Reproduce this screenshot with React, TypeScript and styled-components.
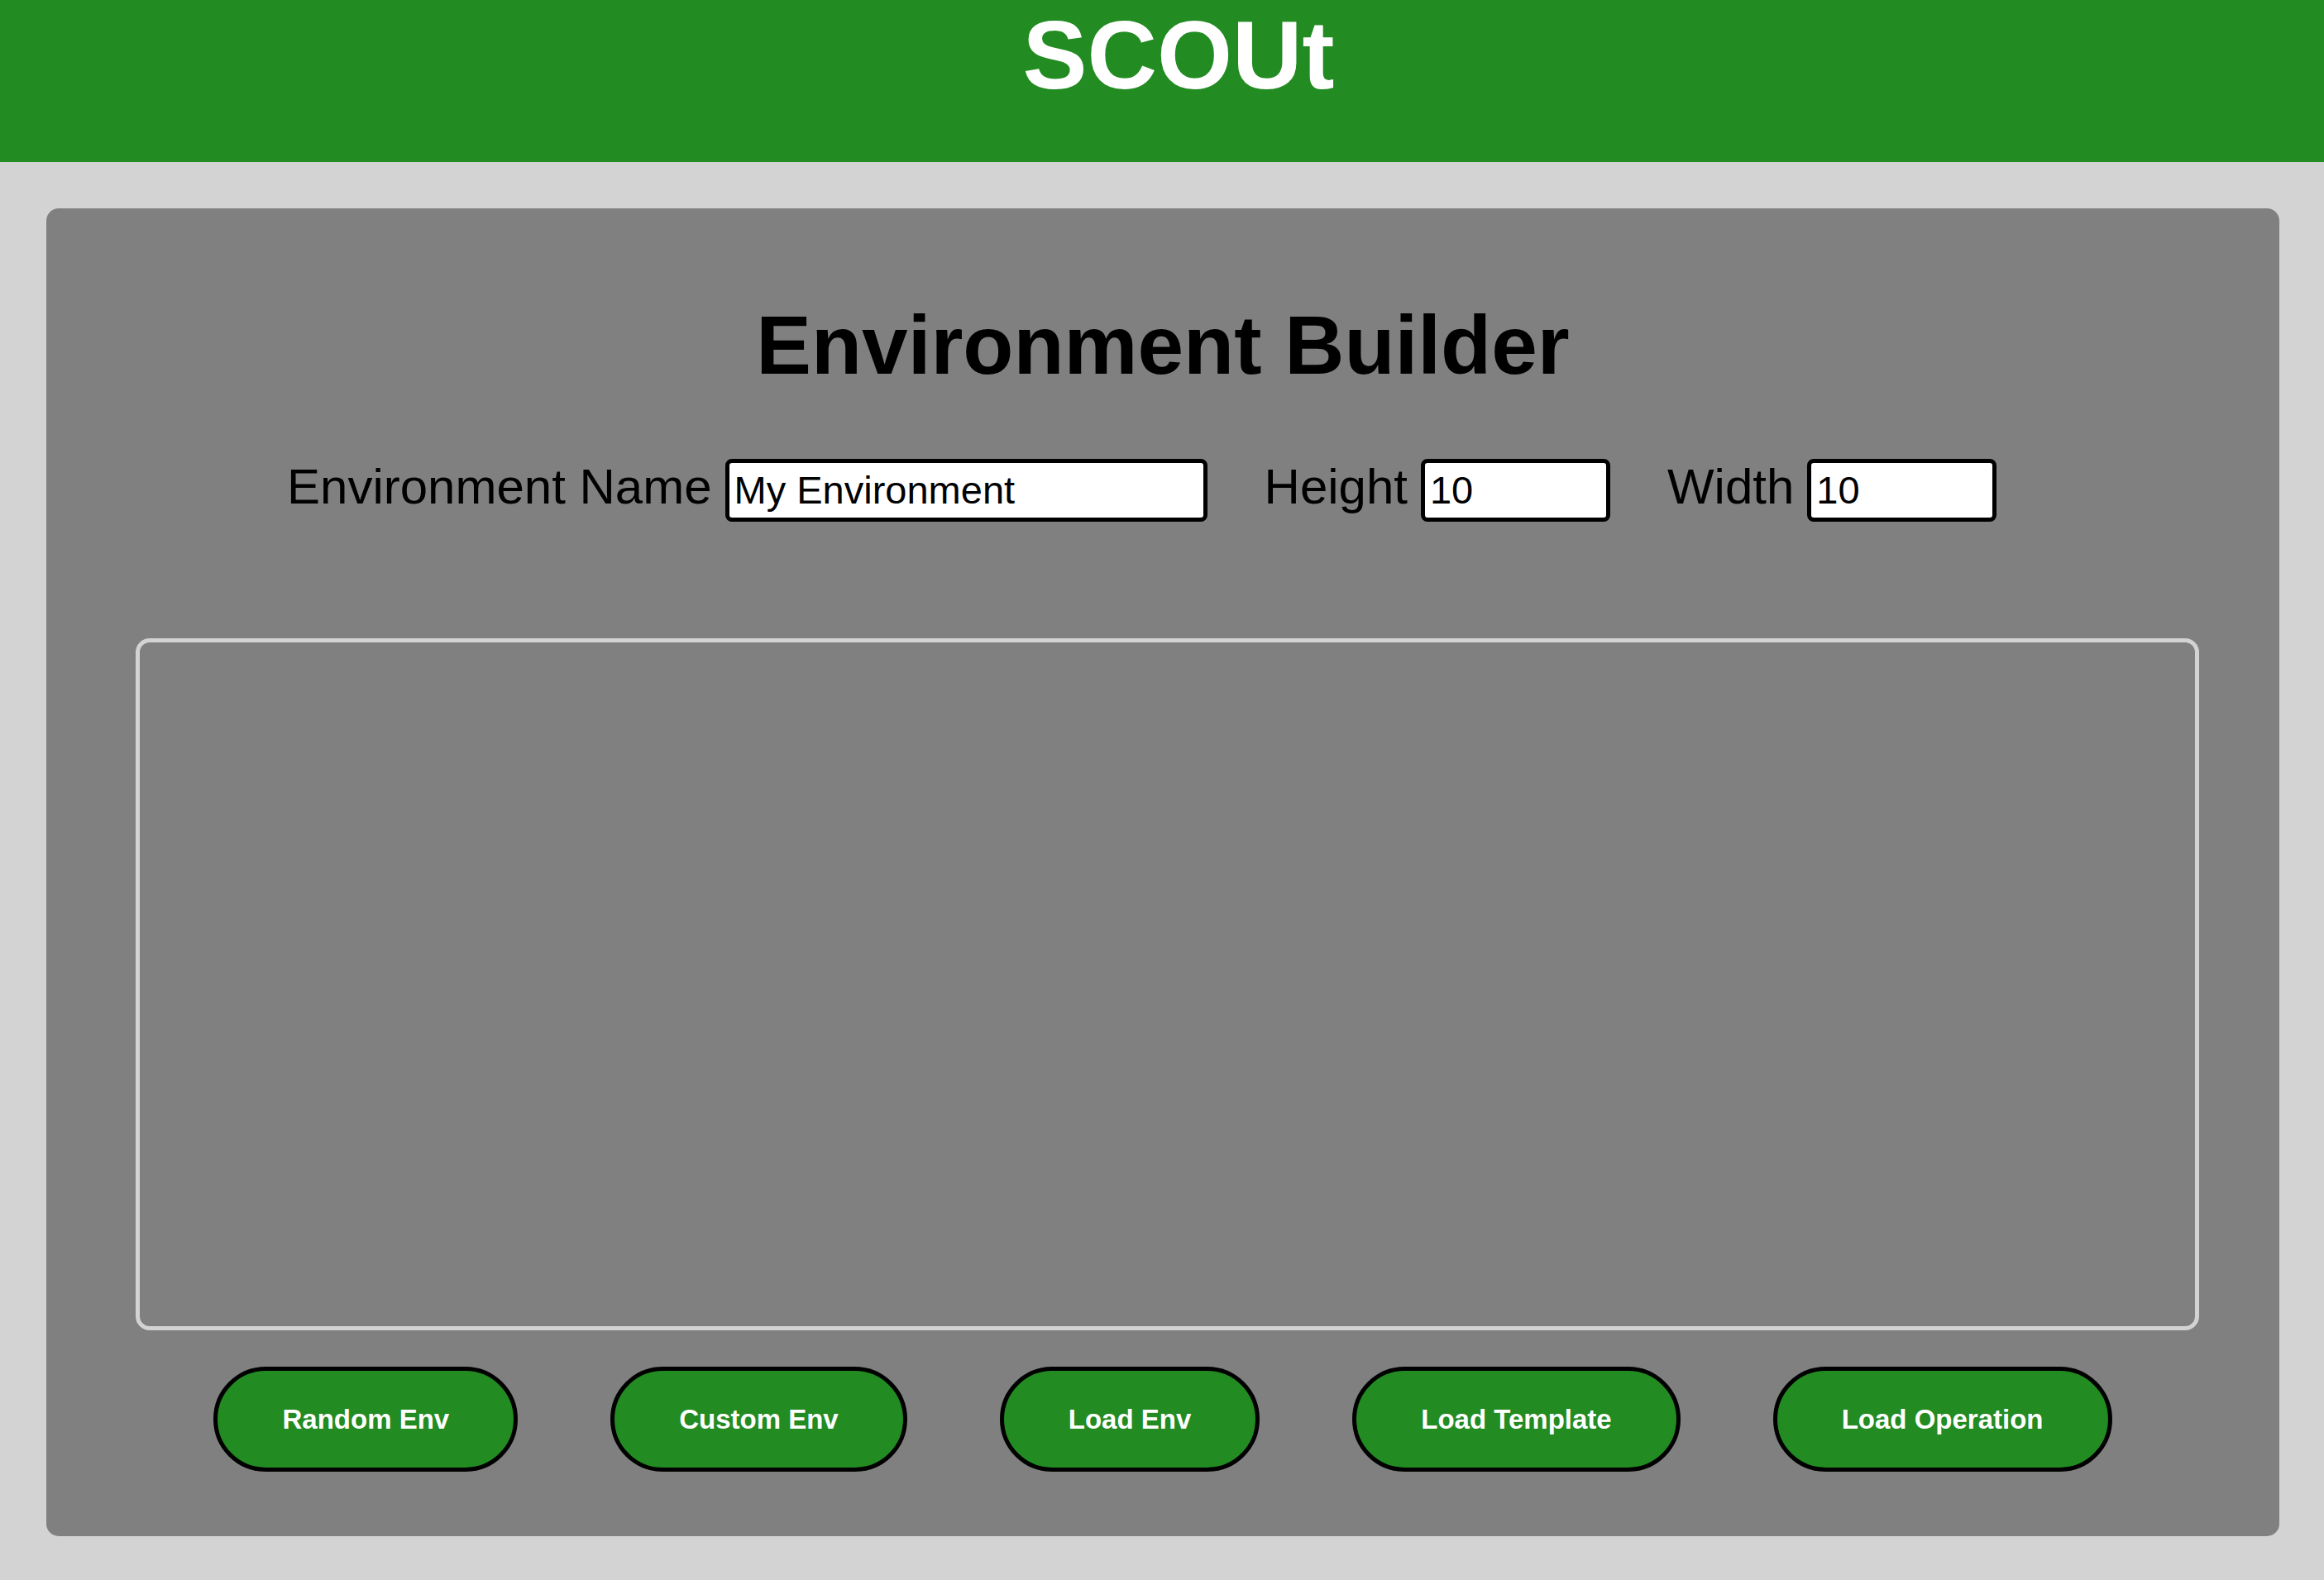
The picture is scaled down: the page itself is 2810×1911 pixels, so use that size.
import React from "react";
import styled, { createGlobalStyle } from "styled-components";

const GlobalStyle = createGlobalStyle`
  html, body {
    margin: 0;
    padding: 0;
    background: #d3d3d3;
    font-family: "Liberation Sans", Arial, sans-serif;
  }
  * { box-sizing: border-box; }
`;

const Header = styled.header`
  height: 196px;
  background: #228b22;
  padding-left: 40px;
  display: flex;
  justify-content: center;
  align-items: flex-start;
`;

const Logo = styled.h1`
  margin: 0;
  font-size: 117px;
  line-height: 1.15;
  font-weight: 700;
  color: #ffffff;
`;

const Main = styled.main`
  padding: 56px 54px 53px 56px;
`;

const Panel = styled.section`
  background: #808080;
  border-radius: 15px;
  padding: 108px 0 78px;
  display: flex;
  flex-direction: column;
`;

const Title = styled.h2`
  margin: 0;
  text-align: center;
  font-size: 100px;
  line-height: 1.15;
  font-weight: 700;
  color: #000;
`;

const FieldRow = styled.div`
  margin-top: 79px;
  padding-left: 291px;
  display: flex;
  align-items: baseline;
  gap: 69px;
`;

const Field = styled.div`
  display: flex;
  align-items: baseline;
  gap: 16px;
`;

const Label = styled.label`
  font-size: 60px;
  line-height: 1.15;
  color: #000;
`;

const TextInput = styled.input<{ $w: number }>`
  width: ${(p) => p.$w}px;
  height: 76px;
  border: 5px solid #000;
  border-radius: 8px;
  background: #fff;
  padding: 0 6px;
  font-family: "Liberation Sans", Arial, sans-serif;
  font-size: 47px;
  color: #000;
  outline: none;
`;

const Canvas = styled.div`
  margin: 141px 0 0 108px;
  width: 2495px;
  height: 837px;
  border: 5px solid #d3d3d3;
  border-radius: 17px;
`;

const ButtonRow = styled.div`
  margin-top: 44px;
  display: flex;
  justify-content: center;
  gap: 112px;
`;

const PillButton = styled.button`
  padding: 40px 78px;
  border: 5px solid #000;
  border-radius: 999px;
  background: #228b22;
  color: #fff;
  font-family: "Liberation Sans", Arial, sans-serif;
  font-size: 33px;
  line-height: 1.15;
  font-weight: 700;
  cursor: pointer;
`;

const buttons = ["Random Env", "Custom Env", "Load Env", "Load Template", "Load Operation"];

export default function App() {
  return (
    <>
      <GlobalStyle />
      <Header>
        <Logo>SCOUt</Logo>
      </Header>
      <Main>
        <Panel>
          <Title>Environment Builder</Title>
          <FieldRow>
            <Field>
              <Label htmlFor="env-name">Environment Name</Label>
              <TextInput id="env-name" $w={583} defaultValue="My Environment" />
            </Field>
            <Field>
              <Label htmlFor="env-height">Height</Label>
              <TextInput id="env-height" $w={229} defaultValue="10" />
            </Field>
            <Field>
              <Label htmlFor="env-width">Width</Label>
              <TextInput id="env-width" $w={229} defaultValue="10" />
            </Field>
          </FieldRow>
          <Canvas />
          <ButtonRow>
            {buttons.map((b) => (
              <PillButton key={b}>{b}</PillButton>
            ))}
          </ButtonRow>
        </Panel>
      </Main>
    </>
  );
}
